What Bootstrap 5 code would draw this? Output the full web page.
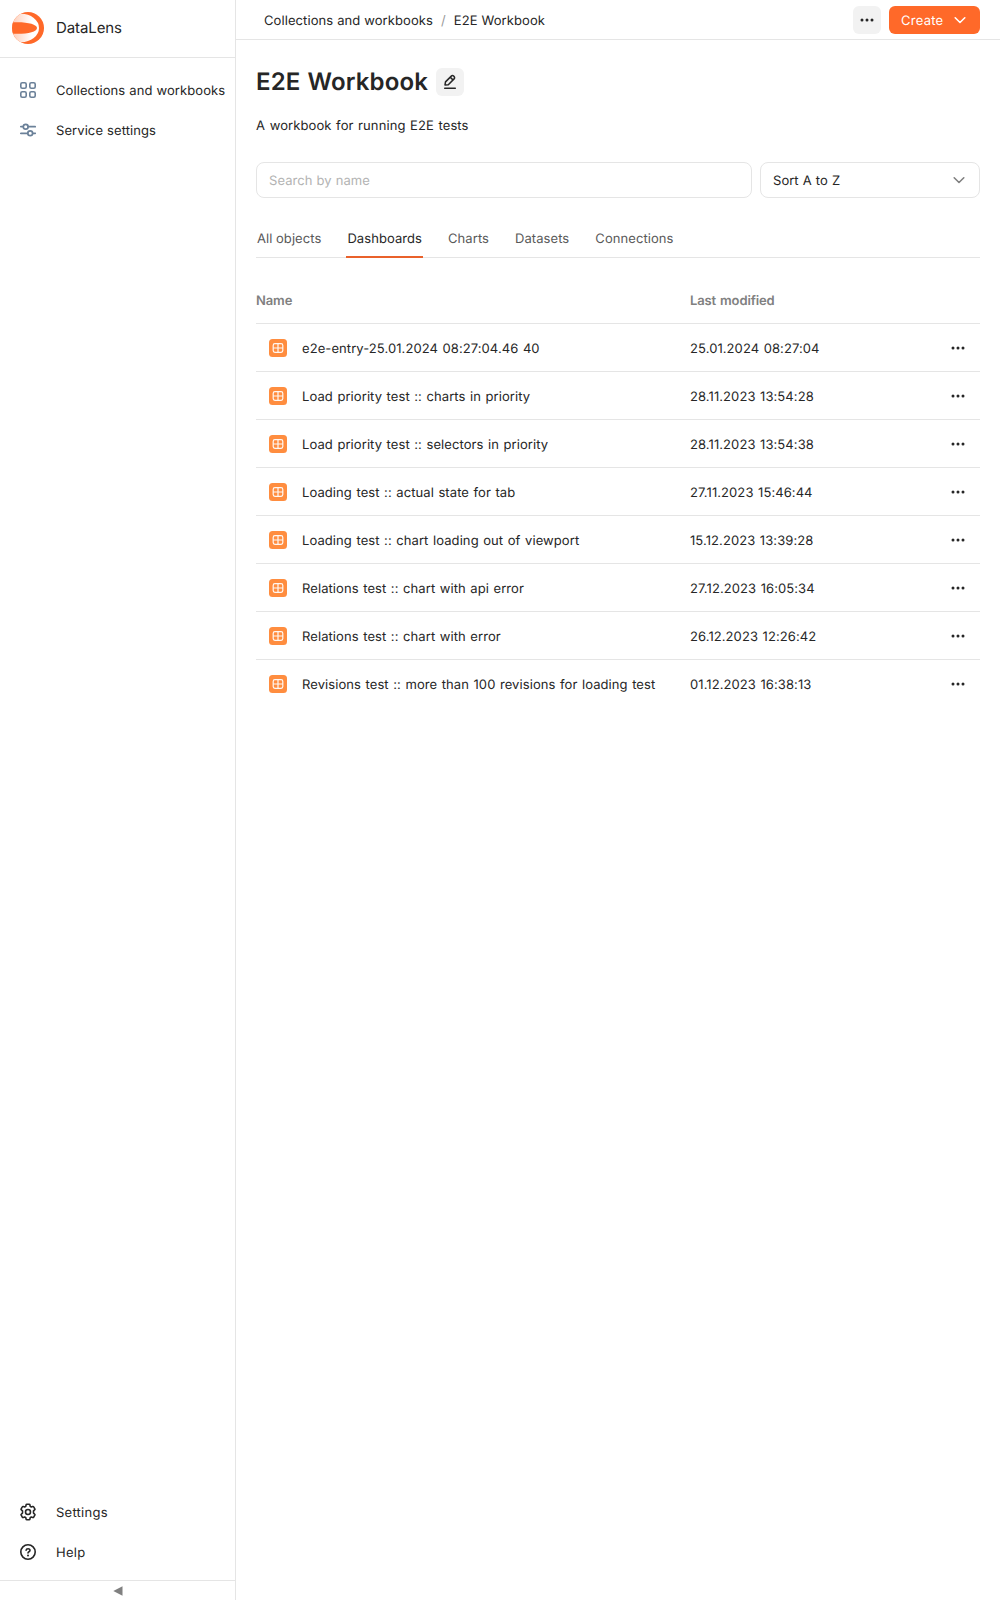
<!DOCTYPE html>
<html lang="en">
<head>
<meta charset="utf-8">
<meta name="viewport" content="width=device-width, initial-scale=1">
<title>E2E Workbook</title>
<link href="https://cdn.jsdelivr.net/npm/bootstrap@5.3.0/dist/css/bootstrap.min.css" rel="stylesheet">
<style>
  body { font: 400 13px/18px Inter, "Liberation Sans", sans-serif; letter-spacing: .08px; word-spacing: .8px; text-rendering: geometricPrecision; color: #262626; --line: #e5e5e5; }
  a { color: inherit; text-decoration: none; }
  svg { display: block; flex: none; }
  .txt { display: block; padding-top: 1px; }
  .aside { width: 236px; flex: none; border-right: 1px solid var(--line); }
  .aside-logo { height: 58px; padding: 0 12px 2px; gap: 12px; font-size: 15px; line-height: 20px; letter-spacing: -.1px; border-bottom: 1px solid var(--line); }
  .aside-item { height: 40px; padding: 0 0 0 20px; gap: 20px; white-space: nowrap; word-spacing: .3px; }
  .aside-top { padding-top: 12px; }
  .aside-top svg { color: #6b8199; }
  .aside-bottom { padding-bottom: 8px; letter-spacing: .25px; }
  .collapse-btn { height: 20px; border: 0; border-top: 1px solid var(--line); background: none; color: #808080; }
  .topbar { height: 40px; padding: 0 20px 0 28px; border-bottom: 1px solid var(--line); word-spacing: .2px; }
  .topbar .txt { padding-top: 2px; }
  .slash { color: #999; }
  .btn-sq { width: 28px; height: 28px; padding: 0; border: 0; border-radius: 6px; background: #f2f2f2; color: #262626; }
  .btn-create { height: 28px; width: 91px; padding: 0 12px; border: 0; border-radius: 6px; background: #ff6929; color: #fff; font-size: 13px; line-height: 18px; letter-spacing: .25px; text-rendering: inherit; }
  .page { padding: 28px 20px 0; }
  h1 { font-size: 24px; line-height: 28px; font-weight: 600; letter-spacing: .16px; }
  .descr { margin-top: 20px; letter-spacing: .1px; }
  .filters { margin-top: 27px; gap: 8px; }
  .field { height: 36px; padding: 0 12px; border: 1px solid var(--line); border-radius: 8px; font-size: 13px; line-height: 18px; color: #262626; letter-spacing: .04px; word-spacing: .4px; text-rendering: inherit; }
  input.field { padding-top: 1px; }
  .field::placeholder { color: #b3b3b3; opacity: 1; }
  .sorter { width: 220px; flex: none; background: #fff; }
  .tabs { margin-top: 20px; height: 40px; gap: 24px; box-shadow: inset 0 -1px var(--line); letter-spacing: .07px; word-spacing: -.2px; }
  .tabs a { padding: 12px 1px 0; color: #595959; border-bottom: 2px solid transparent; }
  .tabs a.active { color: #262626; border-color: #e9612b; }
  .list { margin-top: 19px; }
  .line-row { height: 48px; border-bottom: 1px solid var(--line); }
  .line-row .txt { padding-top: 2px; }
  .line-row:last-child { border: 0; }
  .line-head { height: 47px; color: #808080; font-weight: 600; letter-spacing: -.12px; }
  .line-head .txt, .line-row:last-child .txt { padding-top: 1px; }
  .name-col { width: 434px; flex: none; white-space: nowrap; }
  .entry { padding-left: 13px; gap: 15px; }
  .row-menu { width: 44px; color: #262626; }
</style>
</head>
<body class="bg-white">
<svg width="0" height="0" class="position-absolute">
  <symbol id="dash" viewBox="0 0 18 18"><rect width="18" height="18" rx="3.5" fill="#ff8d3f"/><rect x="4.2" y="4.7" width="9.6" height="8.6" rx="1.7" fill="none" stroke="#fff" stroke-opacity=".93" stroke-width="1.2"/><path d="M9 4.7v8.6M4.2 9h9.6" stroke="#fff" stroke-opacity=".93" stroke-width="1.2"/></symbol>
  <symbol id="dots" viewBox="0 0 16 16"><g fill="currentColor"><circle cx="3" cy="8" r="1.5"/><circle cx="8" cy="8" r="1.5"/><circle cx="13" cy="8" r="1.5"/></g></symbol>
  <symbol id="chev" viewBox="0 0 16 16"><path d="M3.2 5.8 8 10.5l4.8-4.7" fill="none" stroke="currentColor" stroke-width="1.6" stroke-linecap="round" stroke-linejoin="round"/></symbol>
</svg>
<div class="d-flex vh-100">
  <aside class="aside d-flex flex-column">
    <a href="#" class="aside-logo d-flex align-items-center">
      <svg width="32" height="32" viewBox="0 0 32 32">
        <defs><linearGradient id="fade" gradientUnits="userSpaceOnUse" x1="0" x2="20" y1="0" y2="0"><stop offset="0" stop-color="#ffcdb8"/><stop offset="1" stop-color="#fff"/></linearGradient><clipPath id="disc"><circle cx="16" cy="16" r="16"/></clipPath></defs>
        <g clip-path="url(#disc)"><rect width="32" height="32" fill="#ff6929"/><ellipse cx="9" cy="16" rx="18" ry="14.2" fill="url(#fade)"/><path d="M0 10.3C14 9.5 25 11.8 25 16S14 22.5 0 21.7z" fill="#ff6929"/></g>
      </svg>
      <span>DataLens</span>
    </a>
    <nav class="aside-top">
      <a href="#" class="aside-item d-flex align-items-center">
        <svg width="16" height="16" viewBox="0 0 16 16" fill="none" stroke="currentColor" stroke-width="1.6"><rect x=".8" y=".8" width="5.4" height="5.4" rx="1.5"/><rect x="9.8" y=".8" width="5.4" height="5.4" rx="1.5"/><rect x=".8" y="9.8" width="5.4" height="5.4" rx="1.5"/><rect x="9.8" y="9.8" width="5.4" height="5.4" rx="1.5"/></svg>
        <span class="txt">Collections and workbooks</span></a>
      <a href="#" class="aside-item d-flex align-items-center">
        <svg width="16" height="16" viewBox="0 0 16 16" fill="none" stroke="currentColor" stroke-width="1.7" stroke-linecap="round"><circle cx="5.7" cy="4.7" r="2.4"/><circle cx="10.2" cy="11.3" r="2.4"/><path d="M.8 4.7h2.3M8.3 4.7h7M.8 11.3h6.8M12.8 11.3h2.5"/></svg>
        <span class="txt">Service settings</span></a>
    </nav>
    <nav class="aside-bottom mt-auto">
      <a href="#" class="aside-item d-flex align-items-center">
        <svg width="16" height="18" viewBox="0 0 16 18" fill="none" stroke="currentColor" stroke-width="1.6" stroke-linejoin="round"><circle cx="8" cy="9" r="2.5"/><path d="M6.9 1.2h2.2q.7 0 .85.8l.25 1.4 1.1.65 1.35-.5q.7-.25 1.05.4l1.1 1.9q.35.65-.2 1.1L13.5 7.9v2.2l1.1.95q.55.45.2 1.1l-1.1 1.9q-.35.65-1.05.4l-1.35-.5-1.1.65-.25 1.4q-.15.8-.85.8H6.9q-.7 0-.85-.8l-.25-1.4-1.1-.65-1.35.5q-.7.25-1.05-.4l-1.1-1.9q-.35-.65.2-1.1l1.1-.95V7.9l-1.1-.95q-.55-.45-.2-1.1l1.1-1.9q.35-.65 1.05-.4l1.35.5 1.1-.65.25-1.4q.15-.8.85-.8z"/></svg>
        <span class="txt">Settings</span></a>
      <a href="#" class="aside-item d-flex align-items-center">
        <svg width="16" height="16" viewBox="0 0 16 16" fill="none" stroke="currentColor" stroke-width="1.6" stroke-linecap="round" stroke-linejoin="round"><circle cx="8" cy="8" r="7.2"/><path d="M6.1 6.3C6.2 4.3 10 4.2 10 6.4 10 7.8 8 7.7 8 9"/><circle cx="8" cy="11.4" r="1" fill="currentColor" stroke="none"/></svg>
        <span class="txt">Help</span></a>
    </nav>
    <button class="collapse-btn d-flex align-items-center justify-content-center p-0" aria-label="Collapse"><svg width="10" height="10" viewBox="0 0 10 10"><path d="M.3 5 9.5.3v9.4z" fill="currentColor"/></svg></button>
  </aside>

  <main class="flex-grow-1">
    <header class="topbar d-flex align-items-center">
      <div class="txt d-flex gap-2 me-auto"><a href="#">Collections and workbooks</a><span class="slash">/</span><span>E2E Workbook</span></div>
      <button class="btn btn-sq d-flex align-items-center justify-content-center me-2" aria-label="More"><svg width="16" height="16"><use href="#dots"/></svg></button>
      <button class="btn btn-create d-flex align-items-center justify-content-between"><span class="txt">Create</span><svg width="16" height="16"><use href="#chev"/></svg></button>
    </header>
    <div class="page">
      <div class="d-flex align-items-center gap-2">
        <h1 class="mb-0">E2E Workbook</h1>
        <button class="btn btn-sq d-flex align-items-center justify-content-center" aria-label="Edit"><svg width="16" height="16" viewBox="0 0 16 16" fill="none" stroke="currentColor" stroke-width="1.5" stroke-linecap="round" stroke-linejoin="round"><path d="M2.7 14.2h10.6M3 10.9l.5-3 5.8-5.8a1.6 1.6 0 0 1 2.3 0l.5.5a1.6 1.6 0 0 1 0 2.3L6.3 10.7zM8.3 3.3l2.6 2.6"/></svg></button>
      </div>
      <div class="descr"><span class="txt">A workbook for running E2E tests</span></div>
      <div class="filters d-flex">
        <input class="field form-control shadow-none" type="text" placeholder="Search by name">
        <button class="field sorter d-flex align-items-center justify-content-between"><span class="txt">Sort A to Z</span><svg width="16" height="16" color="#808080"><use href="#chev"/></svg></button>
      </div>
      <nav class="tabs d-flex"><a href="#">All objects</a><a href="#" class="active">Dashboards</a><a href="#">Charts</a><a href="#">Datasets</a><a href="#">Connections</a></nav>
      <div class="list">
        <div class="line-row line-head d-flex align-items-center"><div class="name-col txt">Name</div><div class="txt">Last modified</div></div>
        <div class="line-row d-flex align-items-center"><div class="name-col entry d-flex align-items-center"><svg width="18" height="18"><use href="#dash"/></svg><span class="txt">e2e-entry-25.01.2024 08:27:04.46 40</span></div><div class="flex-grow-1 txt">25.01.2024 08:27:04</div><div class="row-menu d-flex justify-content-center"><svg width="16" height="16"><use href="#dots"/></svg></div></div>
        <div class="line-row d-flex align-items-center"><div class="name-col entry d-flex align-items-center"><svg width="18" height="18"><use href="#dash"/></svg><span class="txt">Load priority test :: charts in priority</span></div><div class="flex-grow-1 txt">28.11.2023 13:54:28</div><div class="row-menu d-flex justify-content-center"><svg width="16" height="16"><use href="#dots"/></svg></div></div>
        <div class="line-row d-flex align-items-center"><div class="name-col entry d-flex align-items-center"><svg width="18" height="18"><use href="#dash"/></svg><span class="txt">Load priority test :: selectors in priority</span></div><div class="flex-grow-1 txt">28.11.2023 13:54:38</div><div class="row-menu d-flex justify-content-center"><svg width="16" height="16"><use href="#dots"/></svg></div></div>
        <div class="line-row d-flex align-items-center"><div class="name-col entry d-flex align-items-center"><svg width="18" height="18"><use href="#dash"/></svg><span class="txt">Loading test :: actual state for tab</span></div><div class="flex-grow-1 txt">27.11.2023 15:46:44</div><div class="row-menu d-flex justify-content-center"><svg width="16" height="16"><use href="#dots"/></svg></div></div>
        <div class="line-row d-flex align-items-center"><div class="name-col entry d-flex align-items-center"><svg width="18" height="18"><use href="#dash"/></svg><span class="txt">Loading test :: chart loading out of viewport</span></div><div class="flex-grow-1 txt">15.12.2023 13:39:28</div><div class="row-menu d-flex justify-content-center"><svg width="16" height="16"><use href="#dots"/></svg></div></div>
        <div class="line-row d-flex align-items-center"><div class="name-col entry d-flex align-items-center"><svg width="18" height="18"><use href="#dash"/></svg><span class="txt">Relations test :: chart with api error</span></div><div class="flex-grow-1 txt">27.12.2023 16:05:34</div><div class="row-menu d-flex justify-content-center"><svg width="16" height="16"><use href="#dots"/></svg></div></div>
        <div class="line-row d-flex align-items-center"><div class="name-col entry d-flex align-items-center"><svg width="18" height="18"><use href="#dash"/></svg><span class="txt">Relations test :: chart with error</span></div><div class="flex-grow-1 txt">26.12.2023 12:26:42</div><div class="row-menu d-flex justify-content-center"><svg width="16" height="16"><use href="#dots"/></svg></div></div>
        <div class="line-row d-flex align-items-center"><div class="name-col entry d-flex align-items-center"><svg width="18" height="18"><use href="#dash"/></svg><span class="txt">Revisions test :: more than 100 revisions for loading test</span></div><div class="flex-grow-1 txt">01.12.2023 16:38:13</div><div class="row-menu d-flex justify-content-center"><svg width="16" height="16"><use href="#dots"/></svg></div></div>
      </div>
    </div>
  </main>
</div>
<script src="https://cdn.jsdelivr.net/npm/bootstrap@5.3.0/dist/js/bootstrap.bundle.min.js"></script>
</body>
</html>
